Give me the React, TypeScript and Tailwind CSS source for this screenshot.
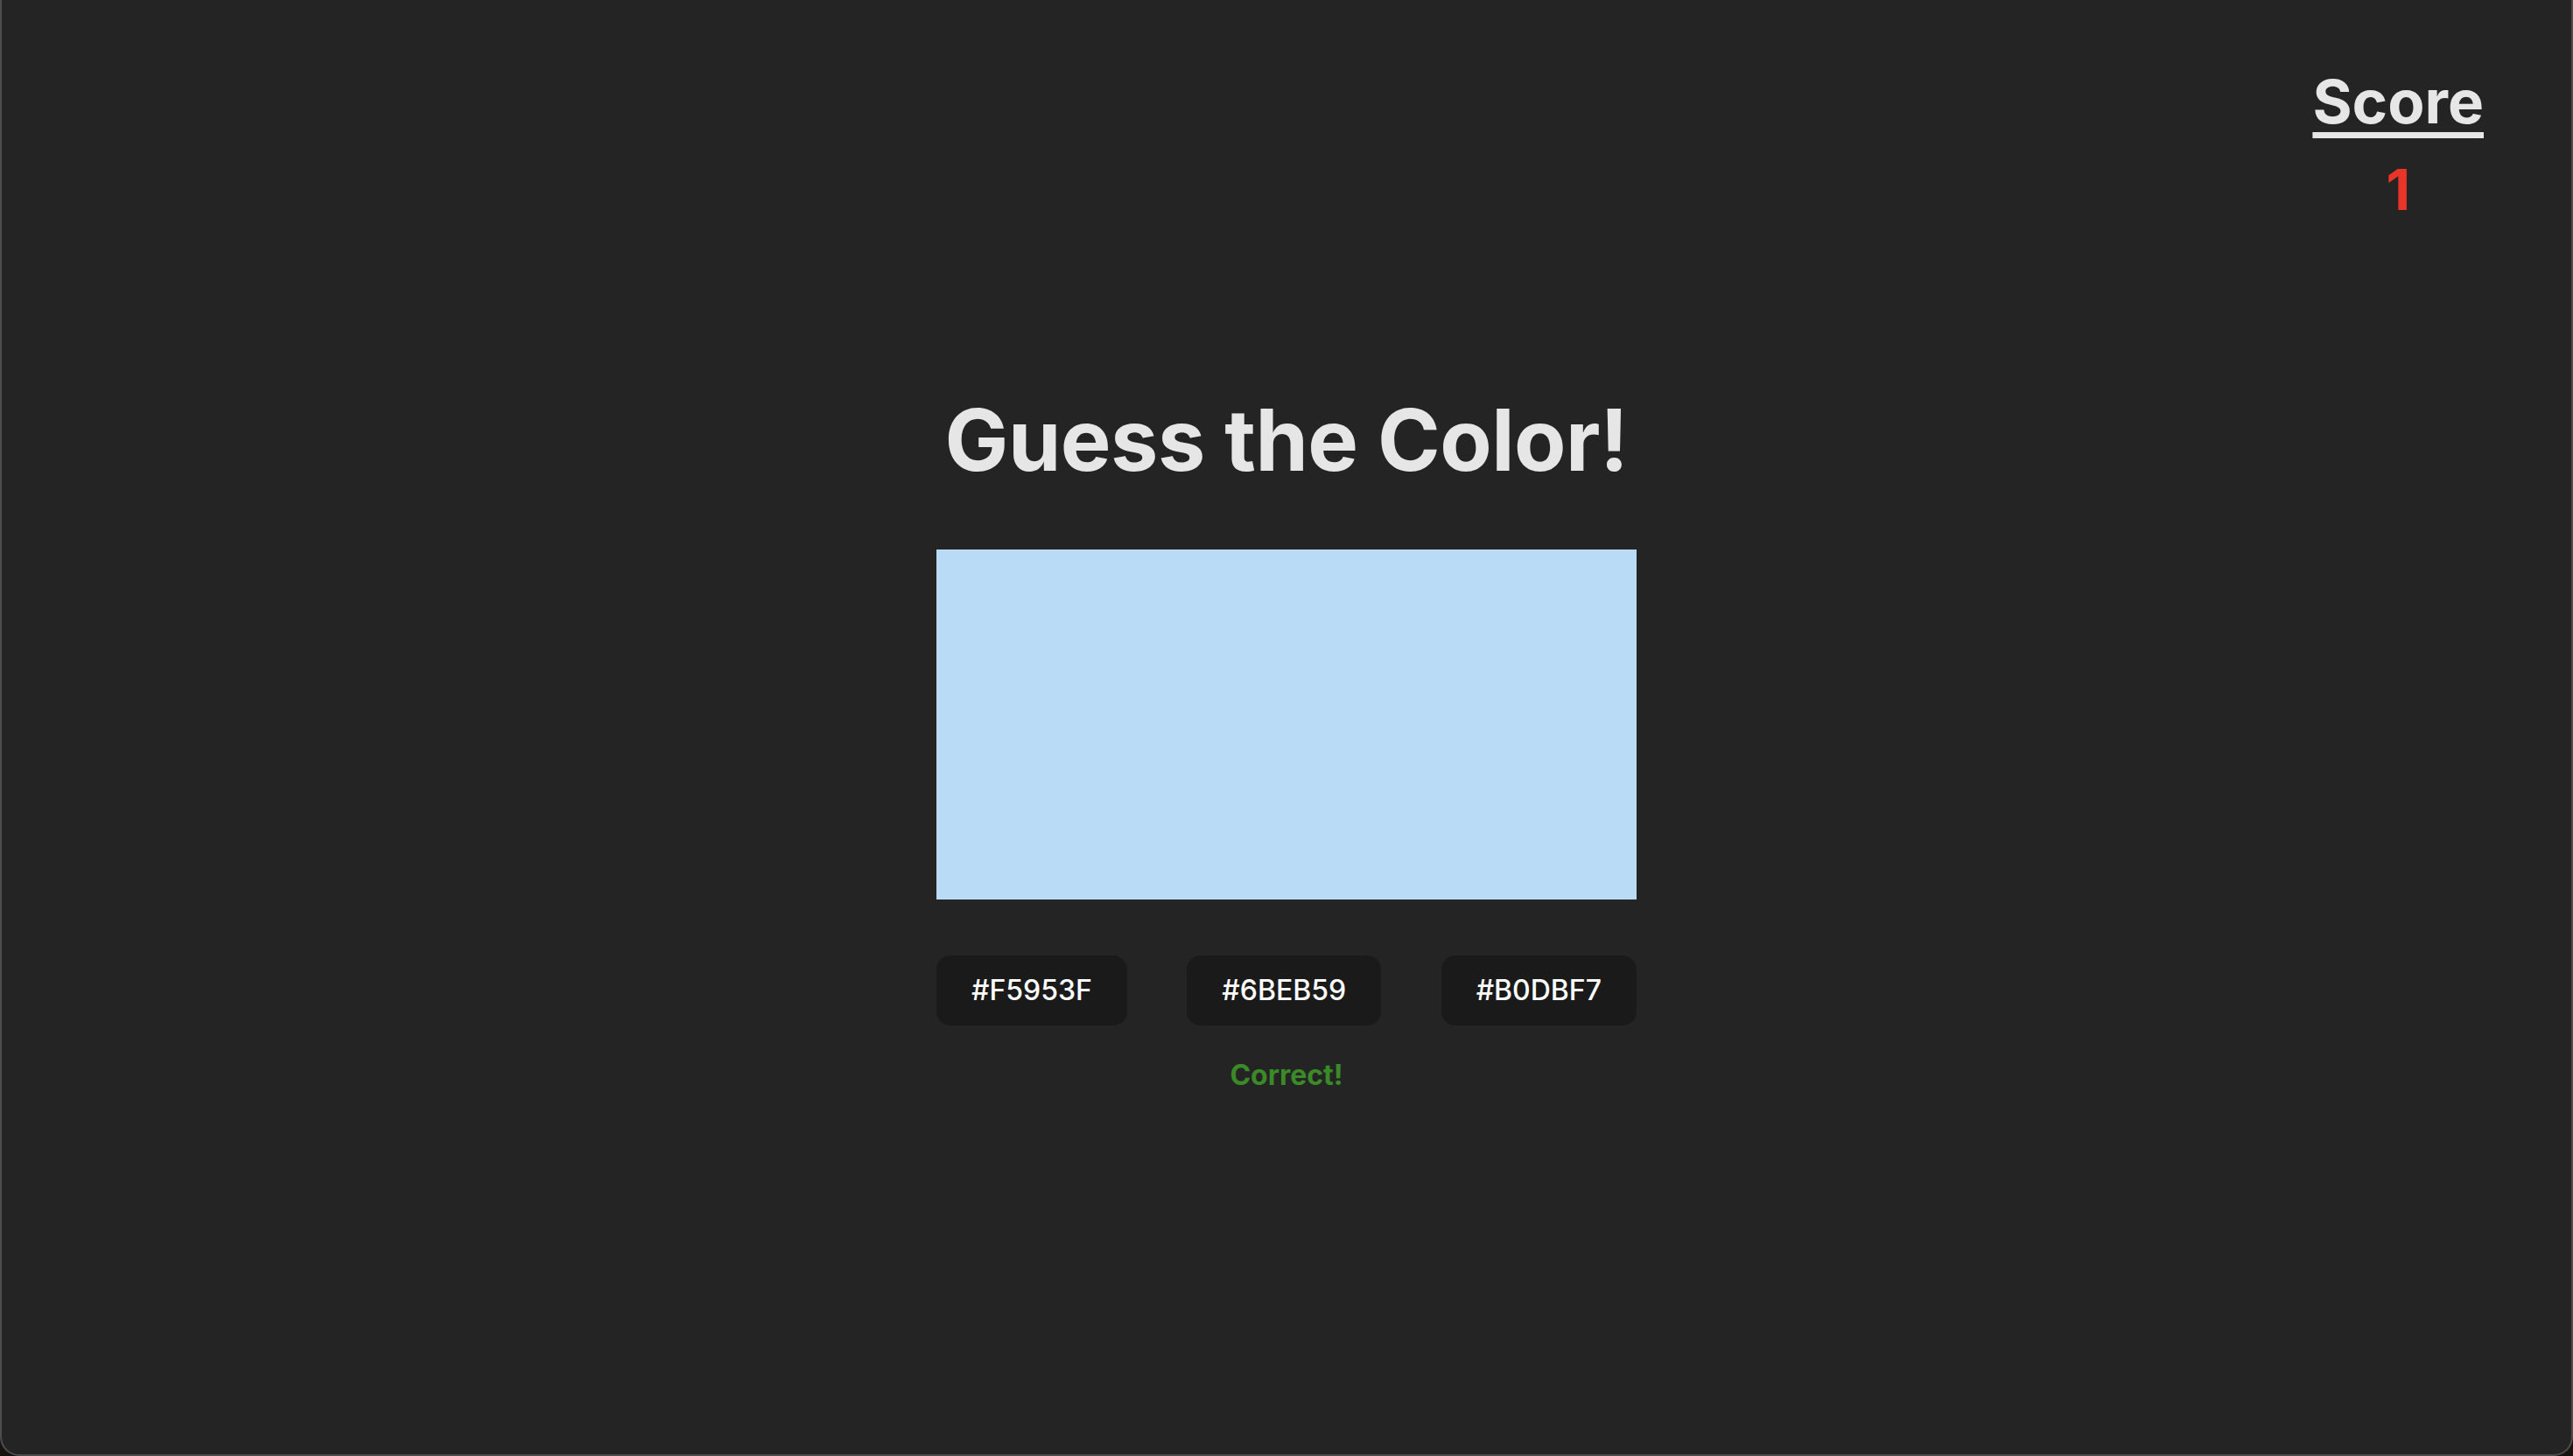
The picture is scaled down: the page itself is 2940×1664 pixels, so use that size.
import React, { useState } from "react";

const options = ["#F5953F", "#6BEB59", "#B0DBF7"];
const target = "#B0DBF7";

const App = () => {
  const [score, setScore] = useState(1);
  const [result, setResult] = useState<string | null>("Correct!");

  const guess = (c: string) => {
    if (c === target) {
      setScore(score + 1);
      setResult("Correct!");
    } else {
      setResult("Wrong!");
    }
  };

  return (
    <div className="h-screen w-full bg-[#17130f] font-['Inter',sans-serif]">
      <div className="relative h-full w-full bg-[#242424] border-l-2 border-r-2 border-b-2 border-[#4d4d4d] rounded-b-[22px] text-[#e6e6e6] flex flex-col items-center justify-center">
        {/* --- SCORE --- */}
        <div className="absolute top-[82px] right-[100px] flex flex-col items-center">
          <h2 className="text-[69px] leading-none font-bold underline decoration-[7px] underline-offset-[10px]">Score</h2>
          <span className="mt-[34px] text-[64px] leading-none font-bold text-[#e8352a]">{score}</span>
        </div>

        <h1 className="text-[97px] leading-[112px] font-bold tracking-[-0.5px] mt-[69px] mb-[69px]">Guess the Color!</h1>
        <div className="w-[800px] h-[400px] bg-[#b9dbf5]" />
        <div className="w-[800px] mt-[64px] flex justify-between">
          {options.map((c) => (
            <button
              key={c}
              onClick={() => guess(c)}
              className="h-[80px] px-[38px] rounded-[16px] bg-[#1a1a1a] border-2 border-transparent text-white text-[32px] font-medium leading-none"
            >
              {c}
            </button>
          ))}
        </div>
        <p className={`mt-[33px] mb-[32px] text-[32px] leading-[1.5] font-bold ${result === "Correct!" ? "text-[#3a8a28]" : "text-[#e8352a]"}`}>
          {result}
        </p>
      </div>
    </div>
  );
};

export default App;
